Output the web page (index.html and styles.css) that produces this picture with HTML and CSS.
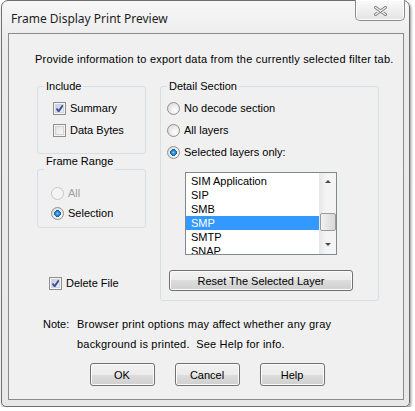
FILE: index.html
```html
<!DOCTYPE html>
<html>
<head>
<meta charset="utf-8">
<link rel="stylesheet" href="styles.css">
</head>
<body>
<div class="window">
  <div class="titlebar">
    <span class="title">Frame Display Print Preview</span>
    <div class="close">
      <svg width="13" height="10" viewBox="0 0 13 10"><path d="M1.5 1.5 L11.5 8.5 M11.5 1.5 L1.5 8.5" stroke="#7e7e7e" stroke-width="3" stroke-linecap="round"/><path d="M1.5 1.5 L11.5 8.5 M11.5 1.5 L1.5 8.5" stroke="#f4f4f4" stroke-width="1.2" stroke-linecap="round"/></svg>
    </div>
  </div>
  <div class="client">
    <p class="intro">Provide information to export data from the currently selected filter tab.</p>
    <div class="main">
      <div class="leftcol">
        <fieldset class="group include">
          <legend>Include</legend>
          <div class="rows">
            <div class="opt"><span class="chk on"></span>Summary</div>
            <div class="opt"><span class="chk"></span>Data Bytes</div>
          </div>
        </fieldset>
        <fieldset class="group range">
          <legend>Frame Range</legend>
          <div class="rows">
            <div class="opt small disabled"><span class="rad dis"></span>All</div>
            <div class="opt small"><span class="rad on"></span>Selection</div>
          </div>
        </fieldset>
        <div class="opt small delete"><span class="chk on"></span>Delete File</div>
      </div>
      <fieldset class="group detail">
        <legend>Detail Section</legend>
        <div class="rows">
          <div class="opt"><span class="rad"></span>No decode section</div>
          <div class="opt"><span class="rad"></span>All layers</div>
          <div class="opt"><span class="rad on"></span>Selected layers only:</div>
        </div>
        <div class="listbox">
          <ul class="items">
            <li>SIM Application</li>
            <li>SIP</li>
            <li>SMB</li>
            <li class="sel">SMP</li>
            <li>SMTP</li>
            <li>SNAP</li>
          </ul>
          <div class="scrollbar">
            <div class="arrow up"></div>
            <div class="track"><div class="thumb"></div></div>
            <div class="arrow down"></div>
          </div>
        </div>
        <button class="btn reset">Reset The Selected Layer</button>
      </fieldset>
    </div>
    <div class="note">
      <span class="note-lbl">Note:</span>
      <span class="note-txt">Browser print options may affect whether any gray<br>background is printed.&nbsp; See Help for info.</span>
    </div>
    <div class="buttons">
      <button class="btn">OK</button>
      <button class="btn">Cancel</button>
      <button class="btn">Help</button>
    </div>
  </div>
</div>
</body>
</html>
```
FILE: styles.css
```css
html, body { margin: 0; padding: 0; background: #ffffff; }
body { padding-left: 1px; font-family: "Liberation Sans", Arial, sans-serif; font-size: 11px; color: #000; }

.window {
  box-sizing: border-box;
  position: relative;
  width: 409px;
  height: 407px;
  border: 1px solid #6e6e6e;
  border-radius: 7px 7px 5px 5px;
  background: linear-gradient(#f7f7f7, #ebebeb 40px, #e8e8e8);
  box-shadow: 1px 2px 3px rgba(0,0,0,0.45);
  display: flex;
  flex-direction: column;
  padding: 0 5px 6px 6px;
}
.titlebar { height: 32px; display: flex; align-items: flex-start; }
.title {
  font-family: "Noto Sans", "Open Sans", sans-serif;
  font-size: 12px;
  line-height: 16px;
  margin-top: 10px;
  margin-left: 3px;
  color: #1e1e1e;
}
.close {
  position: absolute;
  top: -1px; right: 4px;
  width: 50px; height: 21px;
  box-sizing: border-box;
  border: 1px solid #8c8c8c;
  border-top: none;
  border-radius: 0 0 5px 5px;
  background: linear-gradient(#fbfbfb, #efefef 50%, #e4e4e4);
  box-shadow: inset 0 0 0 1px rgba(255,255,255,0.8);
  display: flex; align-items: center; justify-content: center;
}
.close svg { margin-top: 1px; }

.client {
  flex: 1;
  border: 1px solid #8b8b8b;
  background: #f0f0f0;
  display: flex;
  flex-direction: column;
}
.intro { margin: 18px 0 0 26px; line-height: 14px; white-space: nowrap; letter-spacing: 0.21px; }

.main {
  margin: 13px 0 0 28px;
  display: grid;
  grid-template-columns: 109px 219px;
  column-gap: 14px;
  align-items: start;
}
.group {
  margin: 0;
  padding: 0;
  border: 1px solid #d5dfe5;
  border-radius: 3px;
  min-width: 0;
}
.group legend {
  margin-left: 6px;
  padding: 0 2px;
  line-height: 14px;
}
.rows { display: flex; flex-direction: column; }
.opt { display: flex; align-items: center; height: 22px; white-space: nowrap; }
.opt.small { height: 20px; }
.disabled { color: #a0a0a0; }

.include .rows { padding: 4px 0 12px 15px; }
.range legend { padding-bottom: 16px; }
.range .rows { padding: 0 0 4px 13px; margin-top: -1px; }
.delete { margin: 45px 0 0 12px; }
.detail .rows { padding: 4px 0 0 6px; }

.chk {
  width: 13px; height: 13px; box-sizing: border-box;
  border: 1px solid #8e8f8f;
  background: linear-gradient(135deg, #dcdcdc, #ffffff);
  box-shadow: inset 0 0 0 1px #f4f4f4, inset 0 0 0 2px #d2d4d8;
  margin-right: 4px;
  flex: none;
}
.chk.on {
  background:
    url("data:image/svg+xml;utf8,<svg xmlns='http://www.w3.org/2000/svg' width='11' height='11'><path d='M2.5 5.5 L4.6 8.3 L8.8 2.2' fill='none' stroke='%233a4f9a' stroke-width='1.9'/></svg>") center/11px 11px no-repeat,
    linear-gradient(135deg, #b8c6e0, #f4f7fc);
}
.rad {
  width: 13px; height: 13px; box-sizing: border-box;
  border-radius: 50%;
  border: 1px solid #8e8f8f;
  background: radial-gradient(circle at 65% 65%, #ffffff, #e6e6e6 60%, #d4d4d4);
  margin-right: 4px;
  flex: none;
}
.rad.on {
  background:
    radial-gradient(circle at 50% 50%, #7fd0ff 0, #2f8ee0 1.6px, #1a5b99 3.4px, transparent 3.6px),
    radial-gradient(circle at 65% 65%, #ffffff, #e6e6e6 60%, #d4d4d4);
}
.rad.dis { border-color: #c7c7c7; background: #f4f4f4; }

.listbox {
  margin: 9px 0 0 24px;
  width: 152px; height: 83px;
  box-sizing: border-box;
  border: 1px solid #828790;
  background: #fff;
  display: flex;
  overflow: hidden;
}
.items { list-style: none; margin: 0; padding: 1px 0 0 0; flex: 1; overflow: hidden; }
.items li { height: 14px; line-height: 14px; padding-left: 5px; white-space: nowrap; }
.items li.sel { background: #3399ff; color: #fff; }
.scrollbar {
  width: 17px; flex: none;
  background: linear-gradient(90deg, #e6e6e6, #f4f4f4 40%, #f4f4f4);
  display: flex; flex-direction: column;
}
.arrow { height: 17px; position: relative; }
.arrow::after {
  content: ""; position: absolute; left: 6px; top: 7px;
  border-left: 3px solid transparent; border-right: 3px solid transparent;
}
.arrow.up::after { border-bottom: 3px solid #4a4a4a; }
.arrow.down::after { border-top: 3px solid #4a4a4a; top: 6px; }
.track { flex: 1; position: relative; }
.thumb {
  position: absolute; left: 1px; right: 0; top: 23px; height: 18px;
  box-sizing: border-box;
  border: 1px solid #9a9a9a; border-radius: 2px;
  background: linear-gradient(90deg, #f2f2f2, #e4e4e4 50%, #d8d8d8);
}

.btn {
  font-family: "Liberation Sans", Arial, sans-serif;
  font-size: 11px;
  color: #000;
  box-sizing: border-box;
  border: 1px solid #707070;
  border-radius: 3px;
  background: linear-gradient(#f2f2f2, #ebebeb 50%, #dddddd 50%, #cfcfcf);
  box-shadow: inset 0 0 0 1px #fcfcfc;
  padding: 0;
}
.reset { display: block; margin: 15px 0 9px 8px; width: 184px; height: 21px; }

.note { margin: 13px 0 0 34px; display: flex; line-height: 20px; letter-spacing: 0.2px; }
.note-lbl { width: 34px; flex: none; letter-spacing: 0; }
.buttons { margin-top: 9px; display: flex; justify-content: center; gap: 20px; padding-left: 2px; }
.buttons .btn { width: 65px; height: 23px; }
```
